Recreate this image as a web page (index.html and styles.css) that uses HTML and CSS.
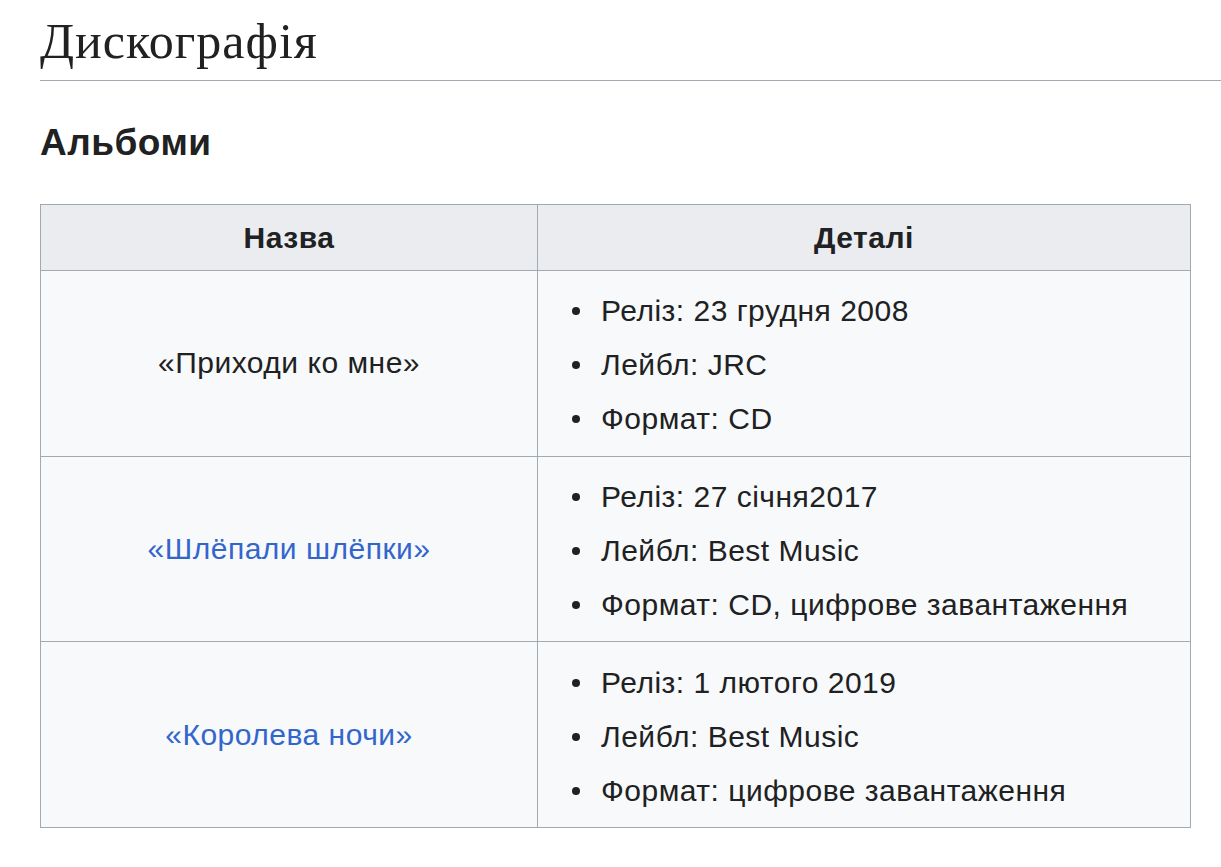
FILE: index.html
```html
<!DOCTYPE html>
<html lang="uk">
<head>
<meta charset="utf-8">
<title>Дискографія</title>
<link rel="stylesheet" href="styles.css">
</head>
<body>
<div class="content">
  <h2 class="section-title">Дискографія</h2>
  <h3 class="subsection-title">Альбоми</h3>
  <table class="wikitable">
    <thead>
      <tr><th class="col-name">Назва</th><th class="col-details">Деталі</th></tr>
    </thead>
    <tbody>
      <tr>
        <td class="name-cell">«Приходи ко мне»</td>
        <td class="details-cell">
          <ul class="details">
            <li>Реліз: 23 грудня 2008</li>
            <li>Лейбл: JRC</li>
            <li>Формат: CD</li>
          </ul>
        </td>
      </tr>
      <tr>
        <td class="name-cell"><a class="link" href="#">«Шлёпали шлёпки»</a></td>
        <td class="details-cell">
          <ul class="details">
            <li>Реліз: 27 січня2017</li>
            <li>Лейбл: Best Music</li>
            <li>Формат: CD, цифрове завантаження</li>
          </ul>
        </td>
      </tr>
      <tr>
        <td class="name-cell"><a class="link" href="#">«Королева ночи»</a></td>
        <td class="details-cell">
          <ul class="details">
            <li>Реліз: 1 лютого 2019</li>
            <li>Лейбл: Best Music</li>
            <li>Формат: цифрове завантаження</li>
          </ul>
        </td>
      </tr>
    </tbody>
  </table>
</div>
</body>
</html>
```
FILE: styles.css
```css
html, body {
  margin: 0;
  padding: 0;
  background: #ffffff;
}
body {
  font-family: "Liberation Sans", Arial, sans-serif;
  color: #202122;
}
.content {
  padding: 0 0 0 40px;
}
.section-title {
  font-family: "Liberation Serif", "Times New Roman", serif;
  font-weight: normal;
  font-size: 50px;
  letter-spacing: 1px;
  line-height: 60px;
  margin: 0;
  padding-top: 11px;
  padding-bottom: 9px;
  border-bottom: 1px solid #a2a9b1;
  color: #202122;
}
.subsection-title {
  font-size: 37px;
  letter-spacing: 0.5px;
  font-weight: bold;
  line-height: 50px;
  margin: 0;
  padding-top: 37px;
  padding-bottom: 36px;
}
.wikitable {
  border-collapse: collapse;
  border: 1px solid #a2a9b1;
  background: #f8f9fa;
  width: 1151px;
  font-size: 30px;
  letter-spacing: 0.5px;
  color: #202122;
}
.wikitable th,
.wikitable td {
  border: 1px solid #a2a9b1;
  padding: 0 16px;
}
.wikitable th {
  background: #eaecf0;
  height: 65px;
  font-weight: bold;
  text-align: center;
}
.col-name { width: 464px; }
.name-cell {
  text-align: center;
  height: 184.7px;
}
.details-cell {
  vertical-align: middle;
}
.link {
  color: #3366cc;
  text-decoration: none;
}
.details {
  margin: 0;
  padding: 4px 0 0 18px;
  list-style: none;
}
.details li {
  line-height: 54px;
}
.details li::before {
  content: "";
  display: inline-block;
  width: 8px;
  height: 8px;
  border-radius: 50%;
  background: #202122;
  margin-right: 21px;
  vertical-align: 6px;
}
```
